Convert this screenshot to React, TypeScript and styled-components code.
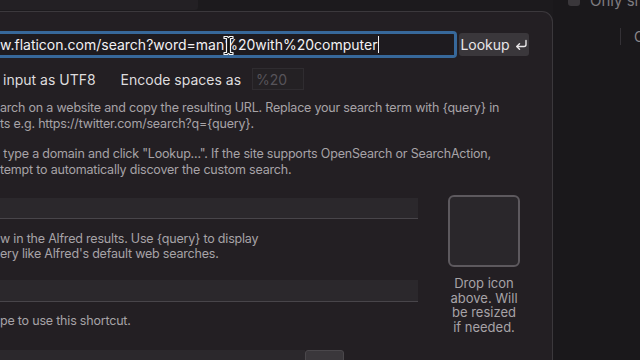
import React from 'react';
import styled, { createGlobalStyle } from 'styled-components';

const GlobalStyle = createGlobalStyle`
  html, body {
    margin: 0;
    padding: 0;
    background: #1c1a1d;
  }
  body {
    font-family: Inter, "Noto Sans", sans-serif;
    -webkit-font-smoothing: antialiased;
  }
`;

const Screen = styled.div`
  width: 640px;
  height: 360px;
  overflow: hidden;
  display: flex;
  background: #1c1a1d;
`;

const MainColumn = styled.div`
  width: 553px;
  flex-shrink: 0;
  display: flex;
  flex-direction: column;
`;

const TopStrip = styled.div`
  height: 11px;
  display: flex;
`;

const TopField = styled.div`
  width: 198px;
  height: 10px;
  background: #232024;
  border-bottom-right-radius: 3px;
`;

const Sheet = styled.div`
  flex: 1;
  background: #231f23;
  border-top: 1px solid #3b383c;
  border-right: 1px solid #3b383c;
  border-top-right-radius: 11px;
  padding-top: 19px;
  display: flex;
  flex-direction: column;
  overflow: hidden;
`;

const UrlRow = styled.div`
  display: flex;
  align-items: center;
  gap: 2px;
  height: 27px;
`;

const UrlField = styled.div`
  position: relative;
  box-sizing: border-box;
  width: 457px;
  height: 27px;
  border: 3px solid #37689a;
  border-left: none;
  border-radius: 0 4px 4px 0;
  background: #1e1b1f;
  color: #f3f1f3;
  font-size: 14px;
  line-height: 21px;
  white-space: nowrap;
  display: flex;
  align-items: center;
`;

const Caret = styled.span`
  display: inline-block;
  width: 1px;
  height: 17px;
  background: #f3f1f3;
  margin-left: 1px;
`;

const IBeam = styled.svg`
  position: absolute;
  left: 222px;
  top: 1px;
`;

const LookupButton = styled.div`
  width: 70px;
  height: 23px;
  box-sizing: border-box;
  background: #3a373b;
  border-radius: 3px;
  color: #e9e7e9;
  font-size: 14px;
  display: flex;
  align-items: center;
  justify-content: center;
  gap: 5px;
`;

const OptionsRow = styled.div`
  display: flex;
  align-items: center;
  height: 22px;
  margin-top: 10px;
  color: #dedcde;
  font-size: 14px;
  white-space: nowrap;
`;

const OptionLabel = styled.span<{ $indent: number }>`
  margin-left: ${(p) => p.$indent}px;
`;

const SmallField = styled.div`
  box-sizing: border-box;
  width: 52px;
  height: 22px;
  margin-left: 11px;
  background: #242124;
  border: 1px solid #2f2c30;
  color: #57545a;
  font-size: 14px;
  padding-left: 3px;
  display: flex;
  align-items: center;
`;

const Para = styled.div<{ $top: number; $lh?: number }>`
  margin-top: ${(p) => p.$top}px;
  color: #a7a3a7;
  font-size: 12.5px;
  letter-spacing: -0.2px;
  line-height: ${(p) => p.$lh ?? 16}px;
  white-space: nowrap;
`;

const LowerSection = styled.div`
  display: flex;
  margin-top: 17px;
`;

const FieldsColumn = styled.div`
  width: 418px;
  padding-top: 3px;
  display: flex;
  flex-direction: column;
`;

const TextField = styled.div<{ $width?: number; $height: number; $top: number }>`
  box-sizing: border-box;
  width: ${(p) => p.$width ?? 418}px;
  height: ${(p) => p.$height}px;
  margin-top: ${(p) => p.$top}px;
  background: #2b282c;
  border-bottom: 1px solid #48454a;
  flex-shrink: 0;
`;

const BottomRow = styled.div`
  display: flex;
  margin-top: 22px;
`;

const SmallButton = styled.div`
  width: 37px;
  height: 22px;
  background: #3a373b;
  border: 1px solid #4a474b;
  border-radius: 3px;
`;

const IconColumn = styled.div`
  margin-left: 30px;
  width: 72px;
  display: flex;
  flex-direction: column;
  align-items: center;
`;

const IconWell = styled.div`
  box-sizing: border-box;
  width: 72px;
  height: 72px;
  border: 2px solid #5d595e;
  border-radius: 6px;
  background: #2a272b;
`;

const Caption = styled.div`
  margin-top: 9px;
  color: #a7a3a7;
  font-size: 13px;
  line-height: 14.7px;
  text-align: center;
  white-space: nowrap;
`;

const SideColumn = styled.div`
  flex: 1;
  background: #1a181b;
  display: flex;
  flex-direction: column;
  overflow: hidden;
`;

const CheckRow = styled.div`
  display: flex;
  align-items: center;
  gap: 10px;
  margin-top: -9px;
  margin-left: 15px;
  height: 18px;
  color: #7f7c80;
  font-size: 15px;
  white-space: nowrap;
`;

const CheckBox = styled.div`
  width: 12px;
  height: 12px;
  border-radius: 3px;
  background: #3a373b;
  flex-shrink: 0;
`;

const HeaderRow = styled.div`
  display: flex;
  align-items: center;
  margin-top: 19px;
  height: 17px;
  color: #8a878b;
  font-size: 14px;
  white-space: nowrap;
`;

const HeaderCell = styled.div`
  width: 67px;
  height: 17px;
  border-right: 1px solid #343136;
  flex-shrink: 0;
`;

const HeaderLabel = styled.span`
  margin-left: 13px;
`;

const ReturnIcon = () => (
  <svg width="13" height="11" viewBox="0 0 13 11" fill="none">
    <path d="M11 1.5V5.5C11 6.6 10.2 7.5 9 7.5H2" stroke="#e9e7e9" strokeWidth="1.4" strokeLinecap="round" />
    <path d="M4.5 4.8L1.8 7.5L4.5 10.2" stroke="#e9e7e9" strokeWidth="1.4" strokeLinecap="round" strokeLinejoin="round" />
  </svg>
);

const TextCursor = () => (
  <IBeam width="13" height="21" viewBox="0 0 13 21">
    <path
      d="M2 1.5H5.3L6.5 2.7L7.7 1.5H11V3.5H8.5V17.5H11V19.5H7.7L6.5 18.3L5.3 19.5H2V17.5H4.5V3.5H2Z"
      fill="#111"
      stroke="#f5f5f5"
      strokeWidth="1.2"
      strokeLinejoin="round"
    />
  </IBeam>
);

const App: React.FC = () => (
  <>
    <GlobalStyle />
    <Screen>
      <MainColumn>
        <TopStrip>
          <TopField />
        </TopStrip>
        <Sheet>
          <UrlRow>
            <UrlField>
              w.flaticon.com/search?word=man%20with%20computer
              <Caret />
              <TextCursor />
            </UrlField>
            <LookupButton>
              Lookup
              <ReturnIcon />
            </LookupButton>
          </UrlRow>

          <OptionsRow>
            <OptionLabel $indent={3}>input as UTF8</OptionLabel>
            <OptionLabel $indent={25}>Encode spaces as</OptionLabel>
            <SmallField>%20</SmallField>
          </OptionsRow>

          <Para $top={10}>
            arch on a website and copy the resulting URL. Replace your search term with {'{query}'} in
            <br />
            ts e.g. https://twitter.com/search?q={'{query}'}.
          </Para>
          <Para $top={14}>
            &nbsp;type a domain and click "Lookup...". If the site supports OpenSearch or SearchAction,
            <br />
            tempt to automatically discover the custom search.
          </Para>

          <LowerSection>
            <FieldsColumn>
              <TextField $height={21} $top={0} />
              <Para $top={12} $lh={15}>
                w in the Alfred results. Use {'{query}'} to display
                <br />
                ery like Alfred's default web searches.
              </Para>
              <TextField $height={22} $top={19} />
              <Para $top={11} $lh={15}>
                pe to use this shortcut.
              </Para>
              <BottomRow>
                <TextField $width={305} $height={22} $top={0} />
                <SmallButton />
              </BottomRow>
            </FieldsColumn>
            <IconColumn>
              <IconWell />
              <Caption>
                Drop icon
                <br />
                above. Will
                <br />
                be resized
                <br />
                if needed.
              </Caption>
            </IconColumn>
          </LowerSection>
        </Sheet>
      </MainColumn>
      <SideColumn>
        <CheckRow>
          <CheckBox />
          Only show
        </CheckRow>
        <HeaderRow>
          <HeaderCell />
          <HeaderLabel>Categories</HeaderLabel>
        </HeaderRow>
      </SideColumn>
    </Screen>
  </>
);

export default App;
